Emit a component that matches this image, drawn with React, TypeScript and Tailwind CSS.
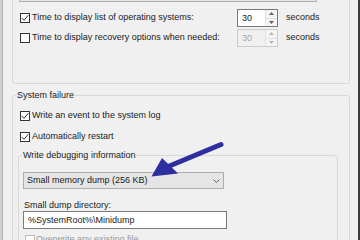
import React from 'react';

const Check = ({ checked, disabled }: { checked?: boolean; disabled?: boolean }) => (
  <span
    className={`flex h-[10px] w-[10px] shrink-0 items-center justify-center border bg-white ${
      disabled ? 'border-[#bcbcbc]' : 'border-[#333333]'
    }`}
  >
    {checked && (
      <svg width="8" height="8" viewBox="0 0 8 8">
        <path d="M0.8 4 L3 6.3 L7.3 1.2" fill="none" stroke="#333333" strokeWidth="1" />
      </svg>
    )}
  </span>
);

const SpinArrow = ({ up, color }: { up?: boolean; color: string }) => (
  <svg width="5" height="3" viewBox="0 0 5 3">
    <path d={up ? 'M0 3 L2.5 0 L5 3 Z' : 'M0 0 L2.5 3 L5 0 Z'} fill={color} />
  </svg>
);

const Spinner = ({ disabled }: { disabled?: boolean }) => (
  <div
    className={`flex h-[18px] w-[41px] shrink-0 border ${
      disabled ? 'border-[#cccccc] bg-[#f0f0f0] text-[#a6a6a6]' : 'border-[#7a7a7a] bg-white text-[#1a1a1a]'
    }`}
  >
    <span className="flex-1 pl-[4px] leading-[16px]">30</span>
    <div className="flex w-[12px] flex-col border-l border-[#e3e3e3] bg-[#f4f4f4]">
      <span className="flex flex-1 items-center justify-center border-b border-[#e3e3e3]">
        <SpinArrow up color={disabled ? '#b8b8b8' : '#606060'} />
      </span>
      <span className="flex flex-1 items-center justify-center">
        <SpinArrow color={disabled ? '#b8b8b8' : '#606060'} />
      </span>
    </div>
  </div>
);

const TimeoutRow = ({ label, checked, disabled }: { label: string; checked?: boolean; disabled?: boolean }) => (
  <div className="flex h-[18px] items-center">
    <div className="flex w-[218px] items-center gap-[2px] pl-[1px]">
      <Check checked={checked} />
      <span className="whitespace-nowrap">{label}</span>
    </div>
    <Spinner disabled={disabled} />
    <span className="ml-[8px]">seconds</span>
  </div>
);

const GroupLabel = ({ children }: { children: React.ReactNode }) => (
  <div className="-mt-[7px] ml-[3px] w-fit bg-[#f0f0f0] px-[1px] leading-[12px]">{children}</div>
);

export default function App() {
  return (
    <div className="relative flex h-[240px] w-[360px] overflow-hidden bg-[#f0f0f0] font-['Liberation_Sans',Arial,sans-serif] text-[9px] text-[#1a1a1a]">
      <div className="w-[2px] shrink-0 bg-[#d0d0d0]" />
      <div className="w-px shrink-0 bg-[#b4b4b4]" />

      <div className="flex-1 pl-[9px]">
        {/* System startup */}
        <div className="-mt-[20px] h-[104px] w-[338px] rounded-[3px] border border-[#d9d9d9] pl-[6px] pt-[3px]">
          <div className="h-[18px] w-[298px] border border-[#adadad] bg-[#e5e5e5]" />
          <div className="mt-[7px]">
            <TimeoutRow label="Time to display list of operating systems:" checked />
          </div>
          <div className="mt-[2px]">
            <TimeoutRow label="Time to display recovery options when needed:" disabled />
          </div>
        </div>

        {/* System failure */}
        <div className="mt-[11px] h-[170px] w-[338px] rounded-[3px] border border-[#d9d9d9]">
          <GroupLabel>System failure</GroupLabel>
          <div className="mt-[8px] flex h-[14px] items-center gap-[2px] pl-[7px]">
            <Check checked />
            <span>Write an event to the system log</span>
          </div>
          <div className="mt-[7px] flex h-[14px] items-center gap-[2px] pl-[7px]">
            <Check checked />
            <span>Automatically restart</span>
          </div>

          <div className="ml-[5px] mt-[11px] h-[100px] w-[320px] rounded-[3px] border border-[#d9d9d9]">
            <GroupLabel>Write debugging information</GroupLabel>
            <div className="ml-[4px] mt-[11px] flex h-[17px] w-[201px] items-center justify-between border border-[#adadad] bg-[#e5e5e5] pl-[3px] pr-[3px]">
              <span>Small memory dump (256 KB)</span>
              <svg width="7" height="4" viewBox="0 0 7 4">
                <polyline points="0.5,0.5 3.5,3.5 6.5,0.5" fill="none" stroke="#606060" strokeWidth="1" />
              </svg>
            </div>
            <div className="ml-[4px] mt-[11px] h-[11px] px-[1px] leading-[11px]">Small dump directory:</div>
            <div className="ml-[4px] h-[18px] w-[204px] border border-[#7a7a7a] bg-white pl-[4px] leading-[16px]">
              %SystemRoot%\Minidump
            </div>
            <div className="ml-[6px] mt-[5px] flex h-[12px] items-center gap-[1px] text-[#9a9a9a]">
              <Check disabled />
              <span>Overwrite any existing file</span>
            </div>
          </div>
        </div>
      </div>

      <div className="w-[2px] shrink-0 bg-[#3c3c3c]" />

      <svg className="pointer-events-none absolute left-0 top-0" width="360" height="240" viewBox="0 0 360 240">
        <line x1="221" y1="144.5" x2="167" y2="167" stroke="#2e2e9e" strokeWidth="5" strokeLinecap="round" />
        <polygon points="151.5,176.5 162,158 178,173.5" fill="#2e2e9e" />
      </svg>
    </div>
  );
}
